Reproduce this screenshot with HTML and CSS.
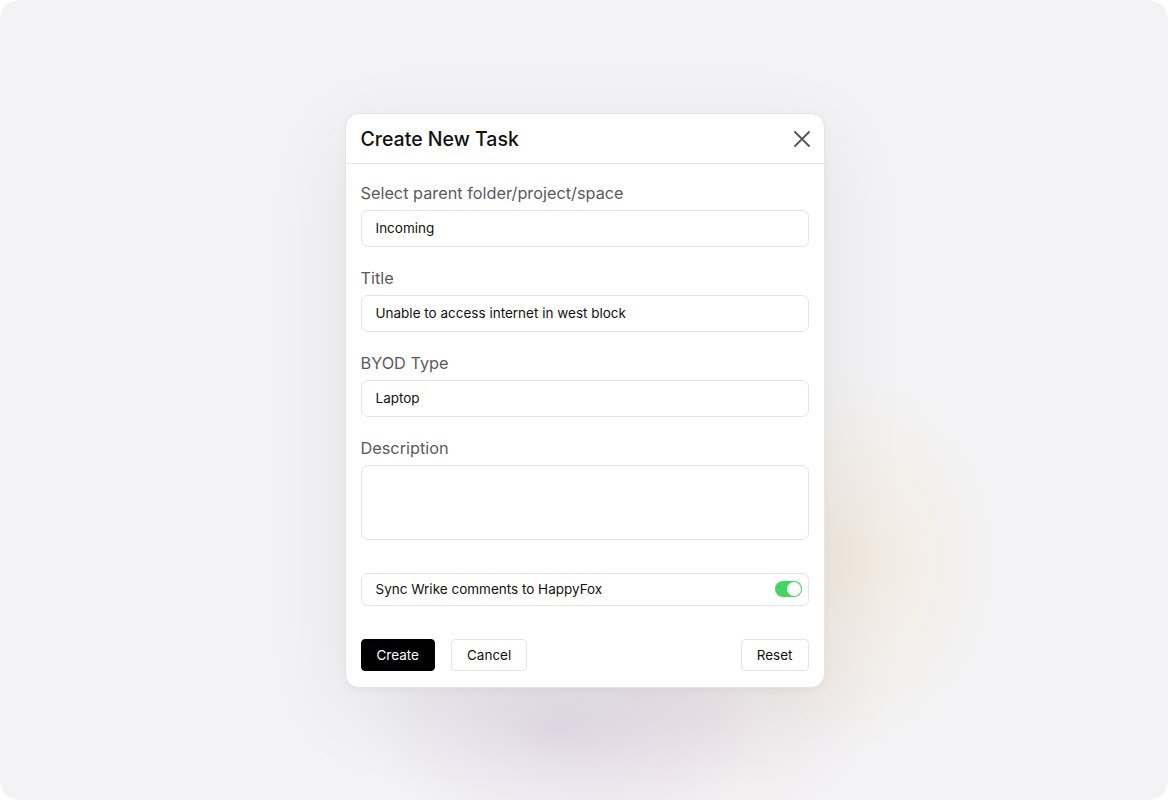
FILE: index.html
```html
<!DOCTYPE html>
<html lang="en">
<head>
  <meta charset="UTF-8">
  <meta name="viewport" content="width=device-width, initial-scale=1.0">
  <title>Create New Task</title>
  <link rel="stylesheet" href="styles.css">
</head>
<body>
  <div class="frame">
    <div class="modal">
      <div class="modal-header">
        <h2>Create New Task</h2>
        <button class="close-btn" aria-label="Close">
          <svg width="18" height="18" viewBox="0 0 18 18">
            <path d="M2 2 L16 16 M16 2 L2 16" stroke="#555" stroke-width="1.8" stroke-linecap="round"/>
          </svg>
        </button>
      </div>

      <div class="modal-body">
        <div class="field">
          <label>Select parent folder/project/space</label>
          <div class="input">Incoming</div>
        </div>
        <div class="field">
          <label>Title</label>
          <div class="input">Unable to access internet in west block</div>
        </div>
        <div class="field">
          <label>BYOD Type</label>
          <div class="input">Laptop</div>
        </div>
        <div class="field">
          <label>Description</label>
          <div class="input textarea"></div>
        </div>

        <div class="sync-row">
          <span>Sync Wrike comments to HappyFox</span>
          <span class="toggle on"><span class="knob"></span></span>
        </div>

        <div class="actions">
          <button class="btn primary">Create</button>
          <button class="btn">Cancel</button>
          <button class="btn reset">Reset</button>
        </div>
      </div>
    </div>
  </div>
</body>
</html>
```

FILE: styles.css
```css
body {
  margin: 0;
  background: #ffffff;
  font-family: Inter, "Noto Sans", sans-serif;
}

.frame {
  width: 1168px;
  height: 800px;
  border-radius: 20px;
  display: flex;
  align-items: center;
  justify-content: center;
  background:
    radial-gradient(ellipse 200px 110px at 560px 730px, rgba(210, 195, 220, 0.45), transparent),
    radial-gradient(ellipse 200px 130px at 700px 720px, rgba(232, 210, 210, 0.3), transparent),
    radial-gradient(ellipse 150px 190px at 850px 560px, rgba(242, 222, 195, 0.45), transparent),
    #f3f3f5;
}

.modal {
  width: 480px;
  margin-left: 1px;
  background: #ffffff;
  border-radius: 14px;
  border: 1px solid #e6e6ea;
  box-shadow: 0 24px 90px rgba(0, 0, 0, 0.07), 0 2px 8px rgba(0, 0, 0, 0.04);
  box-sizing: border-box;
}

.modal-header {
  display: flex;
  align-items: center;
  justify-content: space-between;
  height: 50px;
  padding: 2px 13px 0 15px;
  border-bottom: 1px solid #e8e8ea;
  box-sizing: border-box;
}

.modal-header h2 {
  margin: 0;
  font-size: 19.5px;
  font-weight: 500;
  color: #111;
}

.close-btn {
  border: none;
  background: none;
  padding: 0;
  display: flex;
  cursor: pointer;
}

.modal-body {
  padding: 17px 15px 16px;
}

.field {
  display: flex;
  flex-direction: column;
  gap: 5px;
  margin-bottom: 19px;
}

.field label {
  font-size: 16.3px;
  line-height: 24px;
  color: #5a5a5e;
}

.input {
  height: 37px;
  border: 1px solid #e4e4e7;
  border-radius: 7px;
  padding: 0 14px;
  display: flex;
  align-items: center;
  font-size: 13.5px;
  color: #111;
  box-sizing: border-box;
}

.input.textarea {
  height: 75px;
}

.sync-row {
  margin-top: 33px;
  height: 33px;
  border: 1px solid #e4e4e7;
  border-radius: 7px;
  padding: 0 6px 0 14px;
  display: flex;
  align-items: center;
  justify-content: space-between;
  font-size: 13.5px;
  color: #111;
  box-sizing: border-box;
}

.toggle {
  width: 27px;
  height: 16px;
  border-radius: 8px;
  background: #d4d4d8;
  display: flex;
  align-items: center;
  padding: 0 1px;
  box-sizing: border-box;
}

.toggle.on {
  background: #44d464;
  justify-content: flex-end;
}

.knob {
  width: 14px;
  height: 14px;
  border-radius: 50%;
  background: #fff;
}

.actions {
  display: flex;
  gap: 16px;
  margin-top: 33px;
}

.btn {
  height: 32px;
  padding: 0 15px;
  border: 1px solid #e4e4e7;
  border-radius: 4px;
  background: #fff;
  font-family: inherit;
  font-size: 13.5px;
  color: #111;
  cursor: pointer;
}

.btn.primary {
  background: #000;
  border-color: #000;
  color: #fff;
}

.btn.reset {
  margin-left: auto;
}
```
